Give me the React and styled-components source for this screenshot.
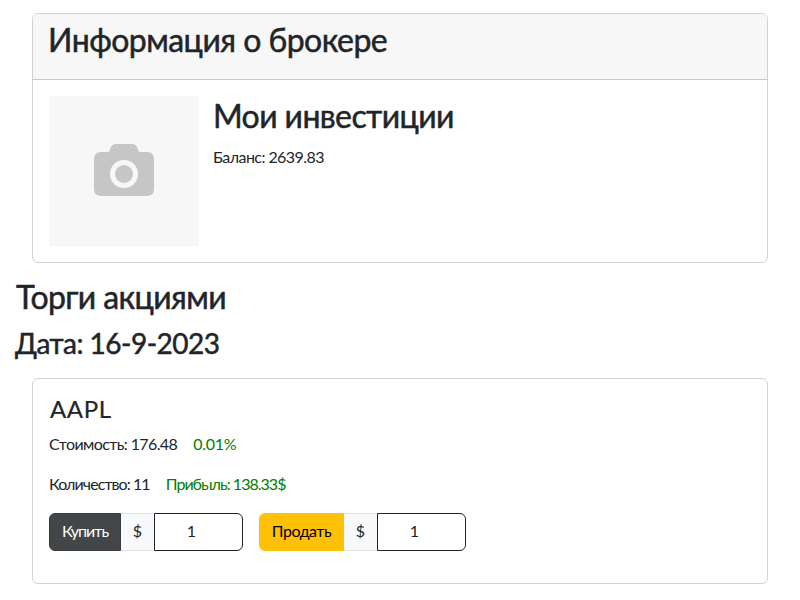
import React from 'react';
import styled, { createGlobalStyle } from 'styled-components';

const GlobalStyle = createGlobalStyle`
  *, *::before, *::after { box-sizing: border-box; }
  body {
    margin: 0;
    background: #fff;
    color: #212529;
    font: 400 16px/24px Lato, "Noto Sans", sans-serif;
  }
`;

const Page = styled.main`
  display: flex;
  flex-direction: column;
  height: 600px;
  padding: 13px 16px 0;
`;

const Card = styled.section`
  height: ${(p) => p.$height}px;
  margin: 0 16px;
  border: 1px solid #d2d2d3;
  border-radius: 6px;
  overflow: hidden;
`;

const CardHeader = styled.header`
  height: 66px;
  padding: 7px 15px;
  background: #f7f7f7;
  border-bottom: 1px solid #c9c9ca;
`;

const Heading = styled.h2`
  margin: 0;
  font-size: 32px;
  font-weight: 400;
  line-height: 38px;
  letter-spacing: ${(p) => p.$spacing || -0.6}px;
  white-space: nowrap;
  -webkit-text-stroke: 0.5px currentColor;
`;

const DateHeading = styled(Heading).attrs({ as: 'h3' })`
  margin-top: 10px;
  margin-left: -1px;
  font-size: 28px;
  line-height: 34px;
`;

const SectionHeading = styled(Heading)`
  margin-top: 15px;
`;

const Ticker = styled(Heading).attrs({ as: 'h4' })`
  margin-left: 1px;
  font-size: 24px;
  line-height: 28px;
  -webkit-text-stroke-width: 0.2px;
`;

const BrokerBody = styled.div`
  display: flex;
  gap: 14px;
  padding: 16px;
`;

const Placeholder = styled.div`
  display: flex;
  align-items: center;
  justify-content: center;
  width: 150px;
  height: 150px;
  padding-bottom: 2px;
  background: #f7f7f7;
`;

const Account = styled.div`
  display: flex;
  flex-direction: column;
  gap: 10px;
  padding-top: 1px;
`;

const Text = styled.span`
  letter-spacing: ${(p) => p.$spacing || 0}px;
  white-space: nowrap;
  color: ${(p) => (p.$gain ? '#008000' : 'inherit')};
`;

const StockCard = styled(Card)`
  margin-top: 18px;
  padding: 16px;
`;

const StatRow = styled.div`
  display: flex;
  gap: 16px;
  height: 24px;
  margin-top: ${(p) => p.$top}px;
`;

const Trades = styled.div`
  display: flex;
  gap: 16px;
  margin-top: 17px;
`;

const InputGroup = styled.div`
  display: flex;
  height: 38px;
`;

const TradeButton = styled.button`
  width: ${(p) => p.$width}px;
  padding: 0 0 2px;
  border: 1px solid ${(p) => (p.$sell ? '#ffc107' : '#373b3e')};
  border-radius: 6px 0 0 6px;
  background: ${(p) => (p.$sell ? '#ffc107' : '#424649')};
  color: ${(p) => (p.$sell ? '#000' : '#fff')};
  font: inherit;
  letter-spacing: ${(p) => p.$spacing}px;
`;

const Currency = styled.span`
  display: flex;
  align-items: center;
  justify-content: center;
  width: 33px;
  padding-bottom: 2px;
  border: 1px solid #dee2e6;
  border-width: 1px 0;
  background: #f8f9fa;
`;

const Quantity = styled.input`
  width: 89px;
  padding: 5px 14px 7px 0;
  border: 1px solid #212529;
  border-radius: 0 6px 6px 0;
  background: #fff;
  color: #212529;
  font: inherit;
  text-align: center;
  outline: none;
`;

const CameraIcon = () => (
  <svg width="60" height="52" viewBox="0 0 60 52">
    <path
      fill="#c6c6c6"
      d="M7 8H13Q15.500 8 16 5.500Q17.500 0 22 0H38Q42.500 0 44 5.500Q44.500 8 47 8H53Q60 8 60 15V45Q60 52 53 52H7Q0 52 0 45V15Q0 8 7 8Z"
    />
    <circle cx="30" cy="30" r="11.500" fill="#c6c6c6" stroke="#f7f7f7" strokeWidth="5" />
  </svg>
);

const Trade = ({ label, sell, width, spacing }) => (
  <InputGroup>
    <TradeButton type="button" $sell={sell} $width={width} $spacing={spacing}>{label}</TradeButton>
    <Currency>$</Currency>
    <Quantity defaultValue="1" aria-label={label} />
  </InputGroup>
);

export default function App() {
  return (
    <>
      <GlobalStyle />
      <Page>
        <Card $height={250}>
          <CardHeader>
            <Heading $spacing={-0.53}>Информация о брокере</Heading>
          </CardHeader>
          <BrokerBody>
            <Placeholder><CameraIcon /></Placeholder>
            <Account>
              <Heading>Мои инвестиции</Heading>
              <Text $spacing={-0.56}>Баланс: 2639.83</Text>
            </Account>
          </BrokerBody>
        </Card>
        <SectionHeading>Торги акциями</SectionHeading>
        <DateHeading $spacing={-0.5}>Дата: 16-9-2023</DateHeading>
        <StockCard $height={206}>
          <Ticker $spacing={0.6}>AAPL</Ticker>
          <StatRow $top={9}>
            <Text $spacing={-0.6}>Стоимость: 176.48</Text>
            <Text $gain $spacing={-0.25}>0.01%</Text>
          </StatRow>
          <StatRow $top={16}>
            <Text $spacing={-0.92}>Количество: 11</Text>
            <Text $gain $spacing={-0.97}>Прибыль: 138.33$</Text>
          </StatRow>
          <Trades>
            <Trade label="Купить" width={72} spacing={-1} />
            <Trade label="Продать" sell width={85} spacing={-0.5} />
          </Trades>
        </StockCard>
      </Page>
    </>
  );
}
